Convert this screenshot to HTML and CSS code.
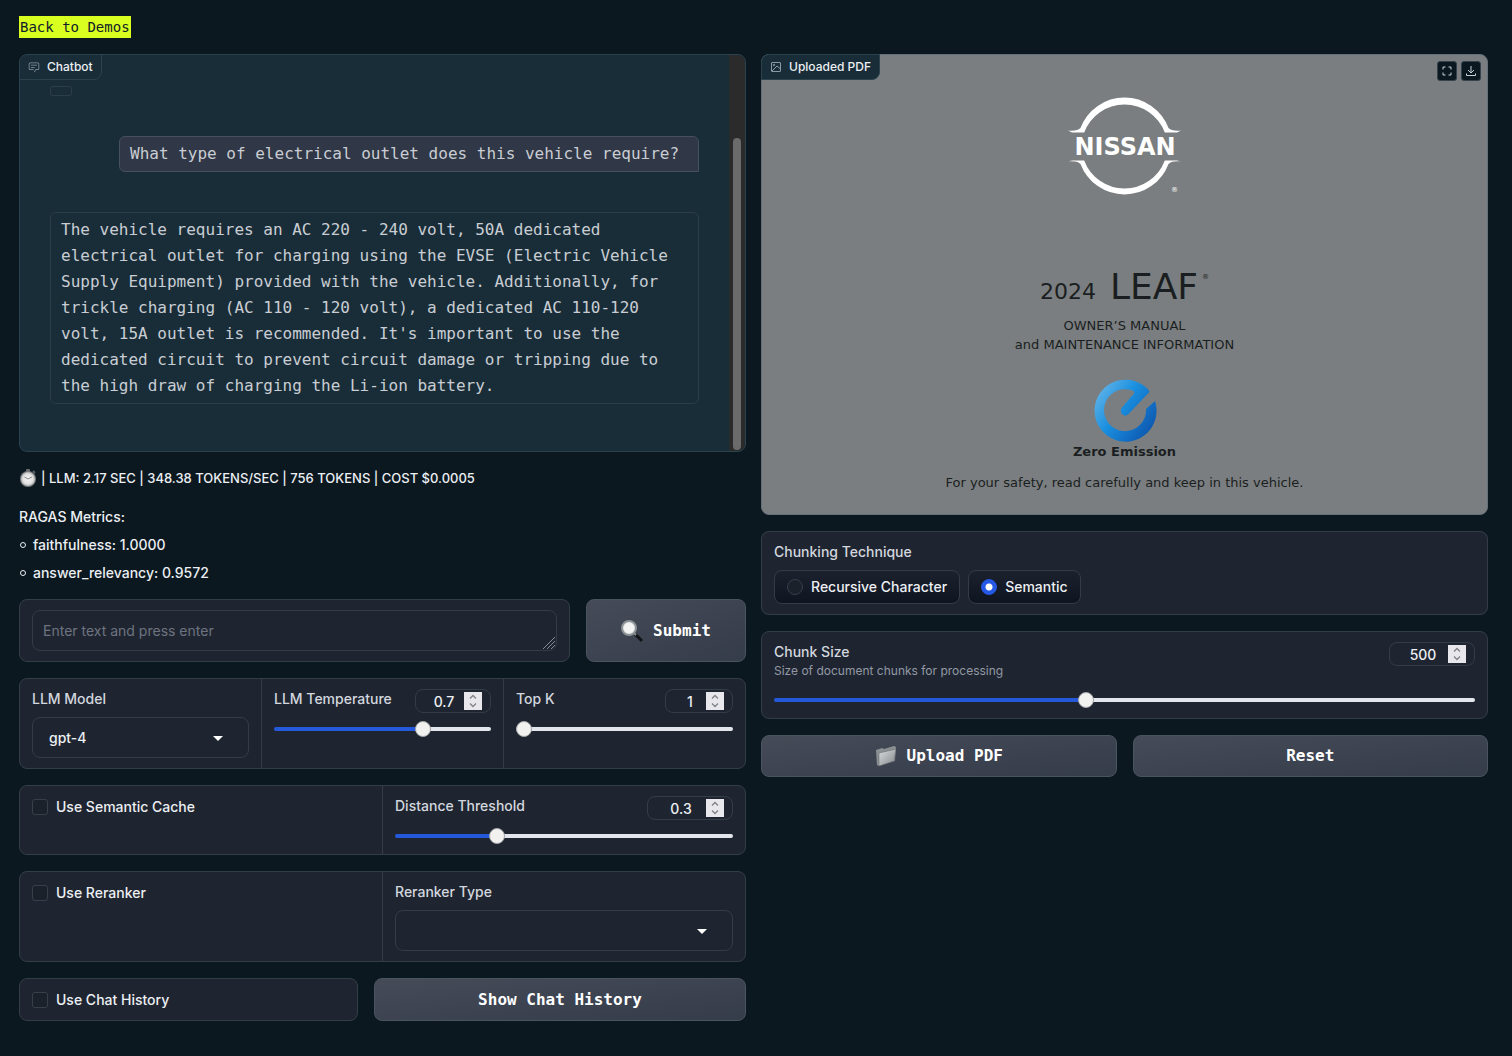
FILE: index.html
```html
<!DOCTYPE html>
<html lang="en">
<head>
<meta charset="utf-8">
<title>PDF Chatbot</title>
<link rel="stylesheet" href="styles.css">
</head>
<body>
<main class="page">
  <a class="back" href="#">Back to Demos</a>
  <div class="columns">
    <div class="column">
      <section class="chat" aria-label="Chatbot">
        <div class="tag">
          <svg class="tag-icon" viewBox="0 0 32 32" aria-hidden="true"><path fill="currentColor" d="M17.7 30 16 29l4-7h6a2 2 0 0 0 2-2V8a2 2 0 0 0-2-2H6a2 2 0 0 0-2 2v12a2 2 0 0 0 2 2h9v2H6a4 4 0 0 1-4-4V8a4 4 0 0 1 4-4h20a4 4 0 0 1 4 4v12a4 4 0 0 1-4 4h-4.800zM8 10h16v2H8zM8 16h10v2H8z"/></svg>
          Chatbot
        </div>
        <div class="messages">
          <div class="bubble bubble-empty"></div>
          <p class="bubble bubble-user">What type of electrical outlet does this vehicle require?</p>
          <p class="bubble bubble-bot">The vehicle requires an AC 220 - 240 volt, 50A dedicated electrical outlet for charging using the EVSE (Electric Vehicle Supply Equipment) provided with the vehicle. Additionally, for trickle charging (AC 110 - 120 volt), a dedicated AC 110-120 volt, 15A outlet is recommended. It's important to use the dedicated circuit to prevent circuit damage or tripping due to the high draw of charging the Li-ion battery.</p>
        </div>
        <div class="scroll-track" aria-hidden="true"><div class="scroll-thumb"></div></div>
      </section>

      <section class="stats">
        <p class="stat-line">
          <svg class="watch" viewBox="0 0 18 18" aria-hidden="true">
            <defs><radialGradient id="dial"><stop offset="0" stop-color="#f4f4f4"/><stop offset=".7" stop-color="#e2e2e2"/><stop offset="1" stop-color="#b4b4b4"/></radialGradient></defs>
            <rect x="7" y="0" width="4" height="4" rx="1" fill="#6a6d70"/><path d="M14 2l2 2" stroke="#5b5f63" stroke-width="2"/>
            <circle cx="9" cy="10" r="8" fill="#777b7f"/><circle cx="9" cy="10" r="7" fill="url(#dial)"/><path d="M5.500 8 9 10l4-2" fill="none" stroke="#888" stroke-width="1"/>
          </svg>
          <span>| LLM: 2.17 SEC | 348.38 TOKENS/SEC | 756 TOKENS | COST $0.0005</span>
        </p>
        <p class="stat-title">RAGAS Metrics:</p>
        <ul class="metrics">
          <li>faithfulness: 1.0000</li>
          <li>answer_relevancy: 0.9572</li>
        </ul>
      </section>

      <div class="ask-row">
        <div class="panel padded"><textarea class="ask" rows="1" aria-label="Question" placeholder="Enter text and press enter"></textarea></div>
        <button class="button" type="button">
          <svg class="button-icon" viewBox="0 0 22 22" aria-hidden="true"><path d="M14 14l6 6" stroke="#101215" stroke-width="3" stroke-linecap="round"/><path d="M13 13l2 2" stroke="#8d9296" stroke-width="2"/><circle cx="8" cy="8" r="7" fill="#e4e5e6" stroke="#8d9296" stroke-width="2"/><circle cx="8" cy="8" r="5" fill="#f3f3f3"/></svg>
          Submit
        </button>
      </div>

      <div class="panel split-3">
        <div class="cell">
          <label class="label" for="model">LLM Model</label>
          <span class="dropdown"><select id="model"><option>gpt-4</option></select></span>
        </div>
        <div class="cell">
          <div class="slider-head"><label class="label" for="temp">LLM Temperature</label><input class="number number-mid" type="number" value="0.7" step="0.1" aria-label="LLM Temperature value"></div>
          <input class="range" id="temp" type="range" min="0" max="1" step="0.1" value="0.7" style="--fill:68%">
        </div>
        <div class="cell">
          <div class="slider-head"><label class="label" for="topk">Top K</label><input class="number number-small" type="number" value="1" aria-label="Top K value"></div>
          <input class="range" id="topk" type="range" min="1" max="20" value="1" style="--fill:0%">
        </div>
      </div>

      <div class="panel split-2">
        <div class="cell"><label class="check"><input type="checkbox">Use Semantic Cache</label></div>
        <div class="cell">
          <div class="slider-head"><label class="label" for="distance">Distance Threshold</label><input class="number" type="number" value="0.3" step="0.1" aria-label="Distance Threshold value"></div>
          <input class="range" id="distance" type="range" min="0.01" max="1" step="0.01" value="0.3" style="--fill:30%">
        </div>
      </div>

      <div class="panel split-2">
        <div class="cell"><label class="check"><input type="checkbox">Use Reranker</label></div>
        <div class="cell">
          <label class="label" for="reranker">Reranker Type</label>
          <span class="dropdown"><select id="reranker"><option></option></select></span>
        </div>
      </div>

      <div class="history-row">
        <div class="panel padded"><label class="check"><input type="checkbox">Use Chat History</label></div>
        <button class="button" type="button">Show Chat History</button>
      </div>
    </div>

    <div class="column">
      <figure class="pdf">
        <figcaption class="tag">
          <svg class="tag-icon" viewBox="0 0 24 24" fill="none" stroke="currentColor" stroke-width="2" aria-hidden="true"><rect x="3" y="3" width="18" height="18" rx="1"/><circle cx="8" cy="8" r="1.500"/><path d="M4 20 14 10l7 6"/></svg>
          Uploaded PDF
        </figcaption>
        <div class="tools">
          <button class="tool" type="button" aria-label="Fullscreen"><svg viewBox="0 0 12 12" fill="none" stroke="currentColor" aria-hidden="true"><path d="M2 4.500V2h2.500M7.500 2H10v2.500M10 7.500V10H7.500M4.500 10H2V7.500"/></svg></button>
          <button class="tool" type="button" aria-label="Download"><svg viewBox="0 0 12 12" fill="none" stroke="currentColor" aria-hidden="true"><path d="M6 1v7M3 5l3 3 3-3M1.500 8.500v2h9v-2"/></svg></button>
        </div>
        <div class="cover">
          <svg class="brand" viewBox="0 0 122 100" role="img" aria-label="Nissan">
            <g fill="#fff">
              <path d="M4 33.500C10 34 14 33.500 16.500 31A47 47 0 0 1 104.500 31C107 33.500 111 34 117 33.500L113 35.500H100.800A43 43 0 0 0 20.200 35.500H8Z"/>
              <path d="M4 64.500C10 64 14 64.500 16.500 67A47 47 0 0 0 104.500 67C107 64.500 111 64 117 64.500L113 63.500H100.800A43 43 0 0 1 20.200 63.500H8Z"/>
              <text class="brand-name" x="61" y="58" text-anchor="middle">NISSAN</text>
              <text class="brand-mark" x="107" y="95">®</text>
            </g>
          </svg>
          <p class="model-line"><span class="year">2024</span><span class="model-name">LEAF</span><sup class="reg">®</sup></p>
          <p class="manual">OWNER’S MANUAL<br>and MAINTENANCE INFORMATION</p>
          <svg class="zero" viewBox="0 0 64 64" aria-hidden="true">
            <defs><linearGradient id="blue" x1="0" y1="0.200" x2="1" y2="0.900"><stop offset="0" stop-color="#62b4e8"/><stop offset=".4" stop-color="#1a8fdf"/><stop offset="1" stop-color="#0b4fa8"/></linearGradient></defs>
            <path fill="url(#blue)" d="M62 23A31 31 0 1 1 55.300 11.600L56.500 14 35 36.500Q32 39 29 36 26.500 33 29 29.500L41 15.500Q42 13 38 12A21 21 0 1 0 53 31Z"/>
          </svg>
          <p class="zero-name">Zero Emission</p>
          <p class="safety">For your safety, read carefully and keep in this vehicle.</p>
        </div>
      </figure>

      <fieldset class="panel padded chunking">
        <legend class="label">Chunking Technique</legend>
        <div class="radios">
          <label class="radio"><input type="radio" name="chunking">Recursive Character</label>
          <label class="radio"><input type="radio" name="chunking" checked>Semantic</label>
        </div>
      </fieldset>

      <div class="panel padded">
        <div class="slider-head slider-head-tall">
          <div><label class="label" for="chunk">Chunk Size</label><p class="hint">Size of document chunks for processing</p></div>
          <input class="number" type="number" value="500" aria-label="Chunk Size value">
        </div>
        <input class="range" id="chunk" type="range" min="100" max="1000" value="500" style="--fill:44.600%">
      </div>

      <div class="actions">
        <button class="button" type="button">
          <svg class="button-icon" viewBox="0 0 22 22" aria-hidden="true"><defs><linearGradient id="folder" x1="0" y1="0" x2="1" y2="1"><stop offset="0" stop-color="#dadcdd"/><stop offset="1" stop-color="#84898c"/></linearGradient></defs><path fill="#8b9093" d="M1 5l6-2 2 1 10-3 2 1-1 14L4 21 2 20z"/><path fill="url(#folder)" stroke="#5c6164" stroke-width="0.500" d="M4 8l17-4-2 12L4 21z"/></svg>
          Upload PDF
        </button>
        <button class="button" type="button">Reset</button>
      </div>
    </div>
  </div>
</main>
</body>
</html>
```
FILE: styles.css
```css
:root {
  --bg: #0b1820;
  --panel: #1f2530;
  --line: #323d46;
  --teal: #192d39;
  --text: #eceff3;
  --label: #d3d7df;
  --sans: Inter, "Liberation Sans", sans-serif;
  --mono: "DejaVu Sans Mono", "Liberation Mono", monospace;
}

*, *::before, *::after { box-sizing: border-box; }

body {
  margin: 0;
  background: var(--bg);
  color: var(--text);
  font: 500 14px/20px var(--sans);
}

p, ul, figure { margin: 0; padding: 0; }
button, input, select, textarea { font: inherit; color: inherit; margin: 0; }

.page { padding: 16px 24px 36px 19px; }

.back {
  display: inline-block;
  vertical-align: top;
  padding: 0 1px;
  background: #d8ff1f;
  color: #10202a;
  font: 400 14px/22px var(--mono);
  text-decoration: none;
}

.columns {
  display: grid;
  grid-template-columns: 1fr 1fr;
  align-items: start;
  gap: 15px;
  margin-top: 16px;
}

.column { display: flex; flex-direction: column; gap: 16px; min-width: 0; }

/* Panels */
.panel { border: 1px solid var(--line); border-radius: 8px; background: var(--panel); overflow: hidden; }
.padded { padding: 10px 12px; }
.split-2, .split-3 { display: grid; gap: 1px; background: var(--line); }
.split-2 { grid-template-columns: 1fr 1fr; }
.split-3 { grid-template-columns: 1fr 1fr 1fr; }
.cell { padding: 10px 12px; background: var(--panel); min-width: 0; }
.label { display: block; padding: 0; color: var(--label); font-weight: 500; }

.tag {
  position: absolute;
  top: -1px;
  left: -1px;
  display: flex;
  align-items: center;
  gap: 7px;
  padding: 3px 8px;
  border: 1px solid #2a414e;
  border-radius: 8px 0 8px 0;
  background: var(--teal);
  font-size: 12px;
  line-height: 18px;
}
.tag-icon { width: 12px; height: 12px; color: #8b99a4; }

/* Chat */
.chat {
  position: relative;
  display: flex;
  border: 1px solid #2a414e;
  border-radius: 8px;
  background: var(--teal);
  overflow: hidden;
}
.messages {
  display: flex;
  flex: 1;
  flex-direction: column;
  gap: 40px;
  padding: 31px 30px 47px;
}
.bubble {
  padding: 4px 10px;
  border: 1px solid #2c3d4a;
  border-radius: 6px;
  color: #c9cdd3;
  font: 400 16px/26px var(--mono);
}
.bubble-empty { width: 22px; height: 10px; padding: 0; border-radius: 3px; }
.bubble-user { align-self: flex-end; min-width: 580px; border-color: #46505e; border-radius: 6px 6px 0 6px; background: #303746; }
.scroll-track { display: flex; flex-direction: column; width: 16px; padding: 83px 4px 1px; background: #2b2b2c; }
.scroll-thumb { flex: 1; border-radius: 4px; background: #6b6b6b; }

/* Stats */
.stat-line { display: flex; align-items: center; gap: 4px; font-size: 13px; }
.watch { width: 18px; height: 18px; }
.stat-title { margin-top: 19px; }
.metrics { display: grid; gap: 8px; margin-top: 8px; list-style: none; }
.metrics li { display: flex; align-items: center; gap: 7px; }
.metrics li::before { content: ""; width: 6px; height: 6px; margin-left: 1px; border: 1px solid var(--text); border-radius: 50%; }

/* Buttons */
.button {
  display: flex;
  align-items: center;
  justify-content: center;
  gap: 10px;
  min-height: 42px;
  padding: 0 16px;
  border: 1px solid #4a5460;
  border-radius: 8px;
  background: linear-gradient(to bottom right, #454b57, #353c4a);
  color: #fff;
  font: 700 16px/24px var(--mono);
}
.button-icon { width: 22px; height: 22px; }
.ask-row { display: grid; grid-template-columns: 1fr 160px; gap: 16px; }
.history-row { display: grid; grid-template-columns: 339fr 372fr; gap: 16px; }
.actions { display: grid; grid-template-columns: 1fr 1fr; gap: 16px; }

/* Fields */
.ask {
  display: block;
  width: 100%;
  height: 41px;
  padding: 10px;
  border: 1px solid var(--line);
  border-radius: 8px;
  background: transparent;
  font-weight: 400;
  line-height: 20px;
  resize: vertical;
}
.ask::placeholder { color: #6d7380; opacity: 1; }
.ask::-webkit-resizer {
  background: url("data:image/svg+xml,%3Csvg xmlns='http://www.w3.org/2000/svg' viewBox='0 0 15 15'%3E%3Cpath d='M2 14 14 2M6 14l8-8M10 14l4-4' stroke='%23878c94'/%3E%3C/svg%3E") center / 15px 15px no-repeat;
}

.dropdown { position: relative; display: block; margin-top: 8px; }
.dropdown select {
  display: block;
  width: 100%;
  height: 41px;
  padding: 0 16px;
  border: 1px solid var(--line);
  border-radius: 8px;
  background: transparent;
  appearance: none;
}
.dropdown::after {
  content: "";
  position: absolute;
  top: 19px;
  right: 26px;
  border: 5px solid transparent;
  border-top-color: #fff;
  border-bottom: 0;
  pointer-events: none;
}

.check { display: flex; align-items: center; gap: 8px; min-height: 21px; }
.check input, .radio input {
  width: 16px;
  height: 16px;
  border: 1px solid #36404b;
  background: #1b212b;
  appearance: none;
}
.check input { border-radius: 3px; }

.chunking { margin: 0; }
.chunking legend { float: left; width: 100%; }
.radios { display: flex; gap: 8px; clear: both; padding-top: 8px; }
.radio {
  display: flex;
  align-items: center;
  gap: 8px;
  height: 34px;
  padding: 0 12px;
  border: 1px solid var(--line);
  border-radius: 8px;
  background: linear-gradient(#1b212d, #0f1520);
}
.radio input { border-radius: 50%; }
.radio input:checked { border-color: #2459e6; background: radial-gradient(#fff 3px, #2459e6 4px); }

.slider-head { display: flex; justify-content: space-between; align-items: flex-start; min-height: 24px; margin-bottom: 8px; }
.slider-head-tall { margin-bottom: 12px; }
.hint { color: #9299a5; font-size: 12px; line-height: 18px; font-weight: 400; }
.number {
  width: 86px;
  height: 24px;
  padding: 0 8px;
  border: 1px solid var(--line);
  border-radius: 8px;
  background: transparent;
  text-align: center;
}
.number-mid { width: 76px; }
.number-small { width: 68px; }
.number::-webkit-inner-spin-button {
  width: 18px;
  height: 18px;
  background: #e8e8ec url("data:image/svg+xml,%3Csvg xmlns='http://www.w3.org/2000/svg' viewBox='0 0 18 18'%3E%3Cpath d='M6 6.500 9 3.500l3 3M6 11.500l3 3 3-3' fill='none' stroke='%23808088' stroke-width='1.300'/%3E%3C/svg%3E") center / 18px 18px no-repeat;
  opacity: 1;
  appearance: none;
}

.range { display: block; width: 100%; height: 16px; background: transparent; appearance: none; }
.range::-webkit-slider-runnable-track {
  height: 4px;
  border-radius: 2px;
  background: linear-gradient(to right, #2459dc var(--fill), #e3e6ec var(--fill));
}
.range::-webkit-slider-thumb {
  width: 16px;
  height: 16px;
  margin-top: -6px;
  border: 1px solid #a3a5a8;
  border-radius: 50%;
  background: #f1f1f0;
  appearance: none;
}

/* PDF cover */
.pdf { position: relative; border: 1px solid #66707a; border-radius: 8px; background: #7a7e80; }
.tools { position: absolute; top: 6px; right: 6px; display: flex; gap: 4px; }
.tool { display: grid; place-items: center; width: 20px; height: 20px; padding: 0; border: 1px solid #34434d; border-radius: 3px; background: #0b1820; color: #c9d1d6; }
.tool svg { width: 12px; height: 12px; }
.cover {
  display: flex;
  flex-direction: column;
  align-items: center;
  padding: 42px 16px 21px;
  color: #1b1e21;
  font-family: "DejaVu Sans", sans-serif;
  font-weight: 400;
  text-align: center;
}
.brand { width: 122px; height: 100px; }
.brand-name { font: 700 24px "DejaVu Sans", sans-serif; }
.brand-mark { font: 400 7px "DejaVu Sans", sans-serif; }
.model-line { display: flex; align-items: baseline; margin-top: 68px; line-height: 44px; }
.year { font-size: 22px; }
.model-name { margin-left: 14px; font-size: 36px; }
.reg { align-self: flex-start; margin-left: 4px; font-size: 7px; line-height: 24px; }
.manual { margin-top: 2px; font-size: 13px; line-height: 19px; }
.zero { width: 64px; height: 64px; margin-top: 24px; }
.zero-name { font-size: 13px; line-height: 20px; font-weight: 700; }
.safety { margin-top: 11px; font-size: 13px; line-height: 20px; }
```
